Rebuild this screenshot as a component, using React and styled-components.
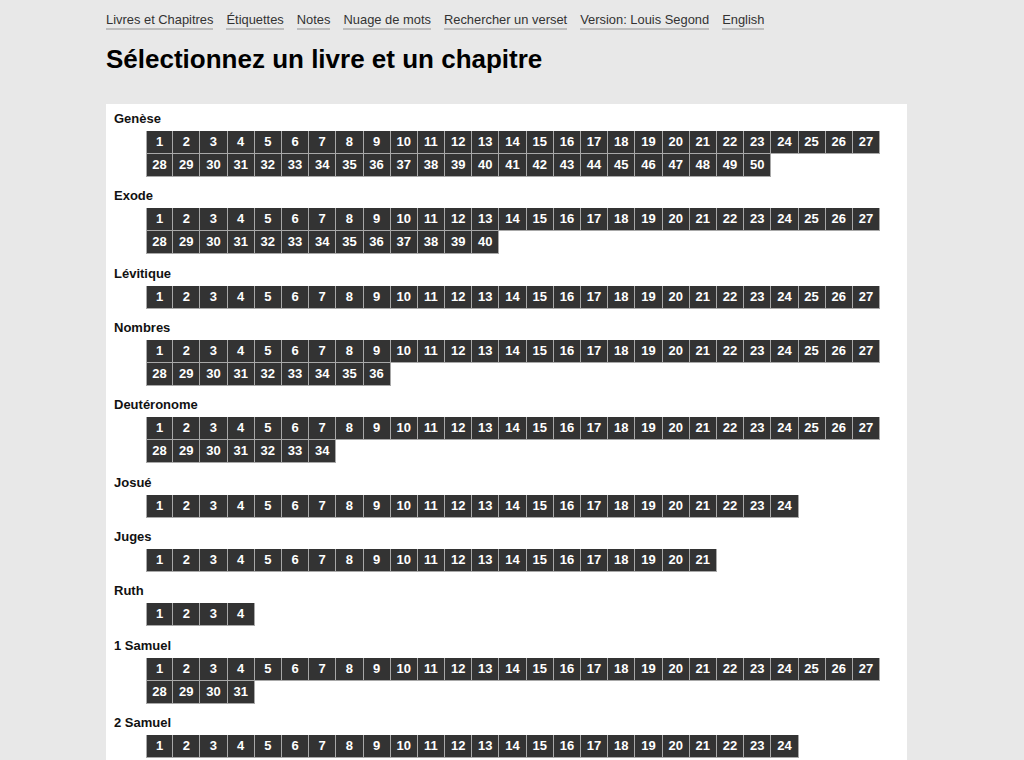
import React from "react";
import styled, { createGlobalStyle } from "styled-components";

const Global = createGlobalStyle`
  html, body { margin: 0; padding: 0; background: #e8e8e8; }
  body { font-family: "Liberation Sans", Arial, Helvetica, sans-serif; color: #111; }
`;

const Page = styled.div`
  margin-left: 106px;
  width: 801px;
  padding-top: 12px;
`;

const Nav = styled.nav`
  display: flex;
  gap: 13px;
  font-size: 12.9px;
  line-height: 16px;
`;

const NavLink = styled.a`
  color: #333;
  text-decoration: none;
  border-bottom: 2px solid #bdbdbd;
  cursor: pointer;
`;

const Title = styled.h1`
  margin: 13px 0 0 0;
  font-size: 26px;
  line-height: 32px;
  font-weight: bold;
  color: #000;
`;

const Panel = styled.div`
  margin-top: 29px;
  background: #fff;
  padding: 7px 8px 20px 8px;
`;

const Book = styled.section`
  margin-bottom: 11.33px;
`;

const BookName = styled.div`
  font-size: 13px;
  line-height: 16px;
  font-weight: bold;
  color: #111;
  margin-bottom: 4px;
`;

const Chapters = styled.div`
  margin-left: 32px;
  display: grid;
  grid-template-columns: repeat(27, 27.2px);
`;

const Chapter = styled.a`
  box-sizing: border-box;
  height: 23px;
  background: #333;
  color: #fff;
  font-size: 13px;
  font-weight: bold;
  line-height: 22px;
  text-align: center;
  text-decoration: none;
  border-right: 1px solid #a8a8a8;
  border-bottom: 1px solid #a8a8a8;
  &:nth-child(27n + 1) {
    border-left: 1px solid #a8a8a8;
  }
  cursor: pointer;
`;

const books = [
  ["Genèse", 50], ["Exode", 40], ["Lévitique", 27], ["Nombres", 36],
  ["Deutéronome", 34], ["Josué", 24], ["Juges", 21], ["Ruth", 4],
  ["1 Samuel", 31], ["2 Samuel", 24], ["1 Rois", 22], ["2 Rois", 25],
  ["1 Chroniques", 29], ["2 Chroniques", 36], ["Esdras", 10], ["Néhémie", 13],
  ["Esther", 10], ["Job", 42], ["Psaumes", 150], ["Proverbes", 31],
  ["Ecclésiaste", 12], ["Cantique des Cantiques", 8], ["Ésaïe", 66],
  ["Jérémie", 52], ["Lamentations", 5], ["Ézéchiel", 48], ["Daniel", 12],
  ["Osée", 14], ["Joël", 3], ["Amos", 9], ["Abdias", 1], ["Jonas", 4],
  ["Michée", 7], ["Nahum", 3], ["Habacuc", 3], ["Sophonie", 3], ["Aggée", 2],
  ["Zacharie", 14], ["Malachie", 4], ["Matthieu", 28], ["Marc", 16],
  ["Luc", 24], ["Jean", 21], ["Actes", 28], ["Romains", 16],
  ["1 Corinthiens", 16], ["2 Corinthiens", 13], ["Galates", 6],
  ["Éphésiens", 6], ["Philippiens", 4], ["Colossiens", 4],
  ["1 Thessaloniciens", 5], ["2 Thessaloniciens", 3], ["1 Timothée", 6],
  ["2 Timothée", 4], ["Tite", 3], ["Philémon", 1], ["Hébreux", 13],
  ["Jacques", 5], ["1 Pierre", 5], ["2 Pierre", 3], ["1 Jean", 5],
  ["2 Jean", 1], ["3 Jean", 1], ["Jude", 1], ["Apocalypse", 22],
];

const links = [
  "Livres et Chapitres",
  "Étiquettes",
  "Notes",
  "Nuage de mots",
  "Rechercher un verset",
  "Version: Louis Segond",
  "English",
];

export default function App() {
  return (
    <>
      <Global />
      <Page>
        <Nav>
          {links.map((l) => (
            <NavLink key={l}>{l}</NavLink>
          ))}
        </Nav>
        <Title>Sélectionnez un livre et un chapitre</Title>
        <Panel>
          {books.map(([name, n]) => (
            <Book key={name}>
              <BookName>{name}</BookName>
              <Chapters>
                {Array.from({ length: n }, (_, i) => (
                  <Chapter key={i}>{i + 1}</Chapter>
                ))}
              </Chapters>
            </Book>
          ))}
        </Panel>
      </Page>
    </>
  );
}
